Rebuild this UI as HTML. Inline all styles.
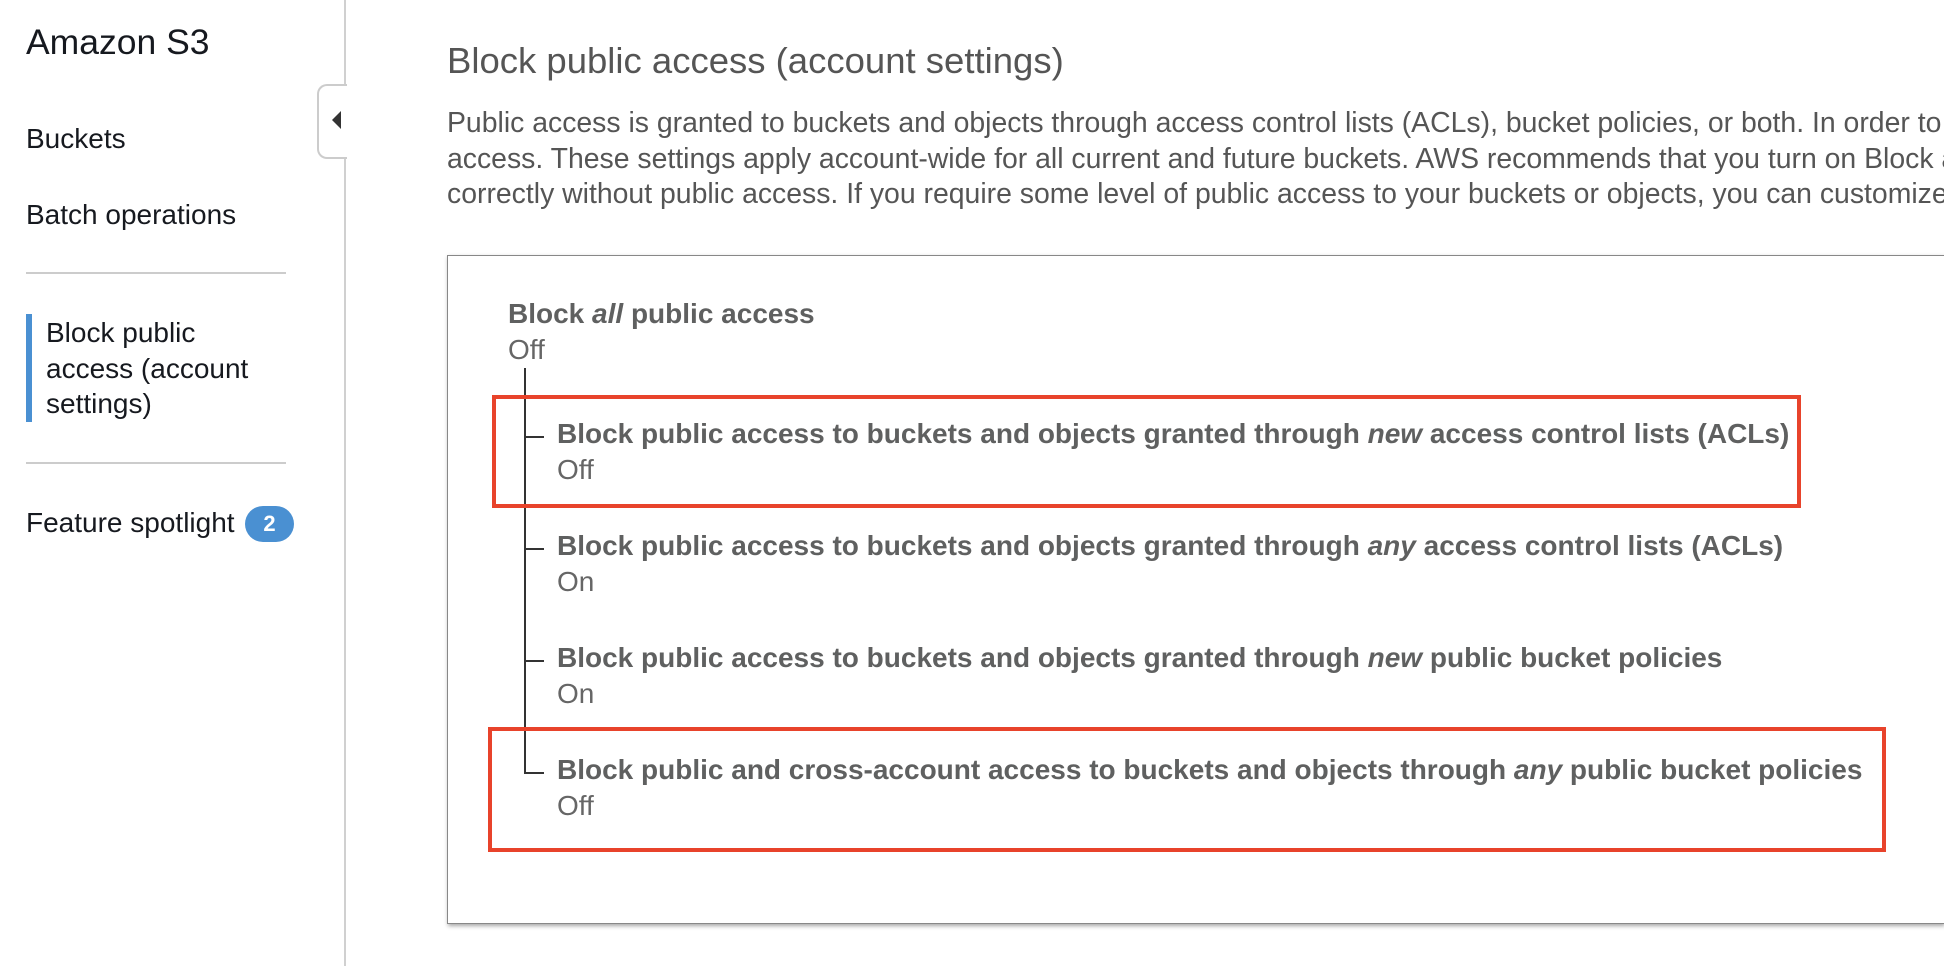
<!DOCTYPE html>
<html><head><meta charset="utf-8"><style>
html,body{margin:0;padding:0;width:1944px;height:966px;overflow:hidden;background:#fff;font-family:"Liberation Sans",Arial,sans-serif;}
.a{position:absolute;white-space:nowrap;}
.side{color:#16191f;font-size:28px;line-height:1;}
.bt{font-size:28px;font-weight:bold;color:#5f6060;line-height:1;}
.st{font-size:28px;color:#666;line-height:1;}
.tick{position:absolute;left:525px;width:19px;height:2px;background:#333;}
.red{position:absolute;border:4px solid #e8432b;box-sizing:border-box;}
</style></head><body>
<div class="a" style="left:26px;top:25px;font-size:35.5px;color:#16191f;line-height:1">Amazon S3</div>
<div class="a side" style="left:26px;top:125px">Buckets</div>
<div class="a side" style="left:26px;top:201px">Batch operations</div>
<div class="a" style="left:26px;top:272px;width:260px;height:2px;background:#ccc"></div>
<div class="a" style="left:26px;top:314px;width:6px;height:108px;background:#4a90d2"></div>
<div class="a side" style="left:46px;top:315px;line-height:35.5px">Block public<br>access (account<br>settings)</div>
<div class="a" style="left:26px;top:462px;width:260px;height:2px;background:#ccc"></div>
<div class="a side" style="left:26px;top:509px">Feature spotlight</div>
<div class="a" style="left:245px;top:506px;width:49px;height:36px;border-radius:18px;background:#4a90d2;color:#fff;font-weight:bold;font-size:22px;line-height:36px;text-align:center">2</div>
<div class="a" style="left:344px;top:0;width:2px;height:966px;background:#d0d0d0"></div>
<div class="a" style="left:317px;top:84px;width:28px;height:71px;border:2px solid #ccc;border-right:none;border-radius:10px 0 0 10px;background:#fff"></div>
<svg class="a" style="left:330px;top:109px" width="14" height="22"><polygon points="2,11 11,2 11,20" fill="#333"/></svg>

<div class="a" style="left:447px;top:43px;font-size:36.5px;color:#555;line-height:1">Block public access (account settings)</div>
<div class="a" style="left:447px;top:106px;width:1497px;overflow:hidden;font-size:28.4px;color:#555;line-height:35.5px">Public access is granted to buckets and objects through access control lists (ACLs), bucket policies, or both. In order to<br>access. These settings apply account-wide for all current and future buckets. AWS recommends that you turn on Block all public<br>correctly without public access. If you require some level of public access to your buckets or objects, you can customize</div>

<div class="a" style="left:447px;top:255px;width:1497px;height:669px;border:1px solid #888;border-right:none;box-sizing:border-box;box-shadow:1px 2px 4px rgba(0,0,0,.35);background:#fff"></div>
<div class="a bt" style="left:508px;top:300px">Block <i>all</i> public access</div>
<div class="a st" style="left:508px;top:336px">Off</div>
<div class="a" style="left:524px;top:368px;width:2px;height:406px;background:#333"></div>
<div class="tick" style="top:436px"></div>
<div class="tick" style="top:548px"></div>
<div class="tick" style="top:660px"></div>
<div class="tick" style="top:772px"></div>
<div class="a bt" style="left:557px;top:420px">Block public access to buckets and objects granted through <i>new</i> access control lists (ACLs)</div>
<div class="a st" style="left:557px;top:456px">Off</div>
<div class="a bt" style="left:557px;top:532px">Block public access to buckets and objects granted through <i>any</i> access control lists (ACLs)</div>
<div class="a st" style="left:557px;top:568px">On</div>
<div class="a bt" style="left:557px;top:644px">Block public access to buckets and objects granted through <i>new</i> public bucket policies</div>
<div class="a st" style="left:557px;top:680px">On</div>
<div class="a bt" style="left:557px;top:756px">Block public and cross-account access to buckets and objects through <i>any</i> public bucket policies</div>
<div class="a st" style="left:557px;top:792px">Off</div>
<div class="red" style="left:492px;top:395px;width:1309px;height:113px"></div>
<div class="red" style="left:488px;top:727px;width:1398px;height:125px"></div>
</body></html>
